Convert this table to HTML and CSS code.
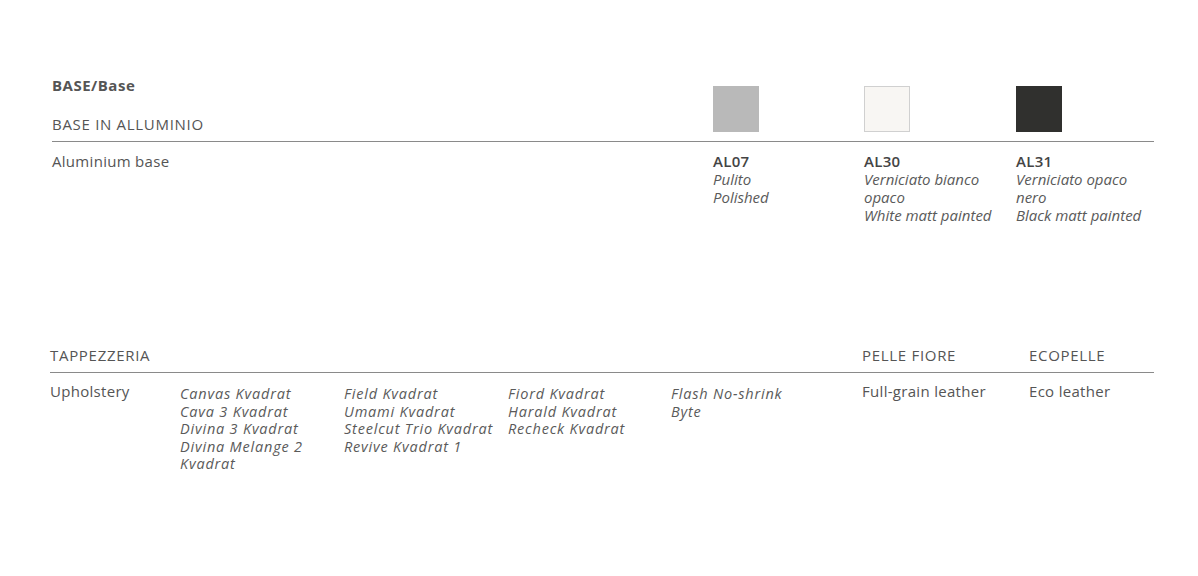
FILE: index.html
```html
<!DOCTYPE html>
<html lang="it">
<head>
<meta charset="utf-8">
<title>Base / Tappezzeria</title>
<link rel="stylesheet" href="styles.css">
</head>
<body>
<main class="page">
  <section class="base">
    <div class="base-head">
      <div class="base-titles">
        <div class="title">BASE/Base</div>
        <div class="subtitle">BASE IN ALLUMINIO</div>
      </div>
      <div class="swatch-cell"><span class="swatch sw-grey"></span></div>
      <div class="swatch-cell"><span class="swatch sw-white"></span></div>
      <div class="swatch-cell"><span class="swatch sw-black"></span></div>
    </div>
    <div class="base-body">
      <div class="label">Aluminium base</div>
      <div class="finish">
        <div class="code">AL07</div>
        <div class="it">Pulito</div>
        <div class="it">Polished</div>
      </div>
      <div class="finish">
        <div class="code">AL30</div>
        <div class="it">Verniciato bianco opaco</div>
        <div class="it">White matt painted</div>
      </div>
      <div class="finish">
        <div class="code">AL31</div>
        <div class="it">Verniciato opaco nero</div>
        <div class="it">Black matt painted</div>
      </div>
    </div>
  </section>

  <section class="uph">
    <div class="uph-head">
      <div class="subtitle">TAPPEZZERIA</div>
      <div class="subtitle">PELLE FIORE</div>
      <div class="subtitle">ECOPELLE</div>
    </div>
    <div class="uph-body">
      <div class="label">Upholstery</div>
      <div class="list">
        <div class="it">Canvas Kvadrat</div>
        <div class="it">Cava 3 Kvadrat</div>
        <div class="it">Divina 3 Kvadrat</div>
        <div class="it">Divina Melange 2 Kvadrat</div>
      </div>
      <div class="list">
        <div class="it">Field Kvadrat</div>
        <div class="it">Umami Kvadrat</div>
        <div class="it">Steelcut Trio Kvadrat</div>
        <div class="it">Revive Kvadrat 1</div>
      </div>
      <div class="list">
        <div class="it">Fiord Kvadrat</div>
        <div class="it">Harald Kvadrat</div>
        <div class="it">Recheck Kvadrat</div>
      </div>
      <div class="list">
        <div class="it">Flash No-shrink</div>
        <div class="it">Byte</div>
      </div>
      <div class="label">Full-grain leather</div>
      <div class="label">Eco leather</div>
    </div>
  </section>
</main>
</body>
</html>
```

FILE: styles.css
```css
* { box-sizing: border-box; }
html, body { margin: 0; padding: 0; background: #fff; }
body {
  font-family: "Open Sans", "Liberation Sans", sans-serif;
  color: #555;
  font-size: 15px;
  width: 1198px;
  height: 576px;
  overflow: hidden;
}
.page { padding: 76px 44px 0 50px; }

.base { margin-left: 2px; }
.base-head {
  display: grid;
  grid-template-columns: 661px 151px 152px 138px;
  border-bottom: 1px solid #8a8a8a;
  padding-bottom: 8px;
}
.base-titles { display: flex; flex-direction: column; }
.title { font-weight: 700; font-size: 15px; line-height: 18px; color: #555; letter-spacing: 0.5px; }
.subtitle { font-size: 15px; line-height: 18px; color: #555; letter-spacing: 0.7px; }
.base-titles .subtitle { margin-top: 21px; }
.swatch-cell { padding-top: 10px; }
.swatch { display: block; width: 46px; height: 46px; }
.sw-grey { background: #b9b9b9; }
.sw-white { background: #f8f6f3; border: 1px solid #d0d0d0; }
.sw-black { background: #30302e; }

.base-body {
  display: grid;
  grid-template-columns: 661px 151px 152px 138px;
  padding-top: 10px;
}
.label { font-size: 15px; line-height: 18px; color: #555; letter-spacing: 0.3px; }
.finish { font-size: 15px; line-height: 18px; padding-right: 6px; }
.code { font-weight: 600; color: #444; letter-spacing: 0.3px; }
.it { font-style: italic; color: #5a5a5a; }

.uph { margin-top: 122px; }
.uph-head {
  display: grid;
  grid-template-columns: 812px 167px 125px;
  border-bottom: 1px solid #8a8a8a;
  padding-bottom: 8px;
}
.uph-body {
  display: grid;
  grid-template-columns: 130px 164px 164px 163px 191px 167px 125px;
  padding-top: 9px;
}
.list { font-size: 14.5px; line-height: 17.6px; padding-top: 3px; padding-right: 4px; letter-spacing: 0.8px; }
```
